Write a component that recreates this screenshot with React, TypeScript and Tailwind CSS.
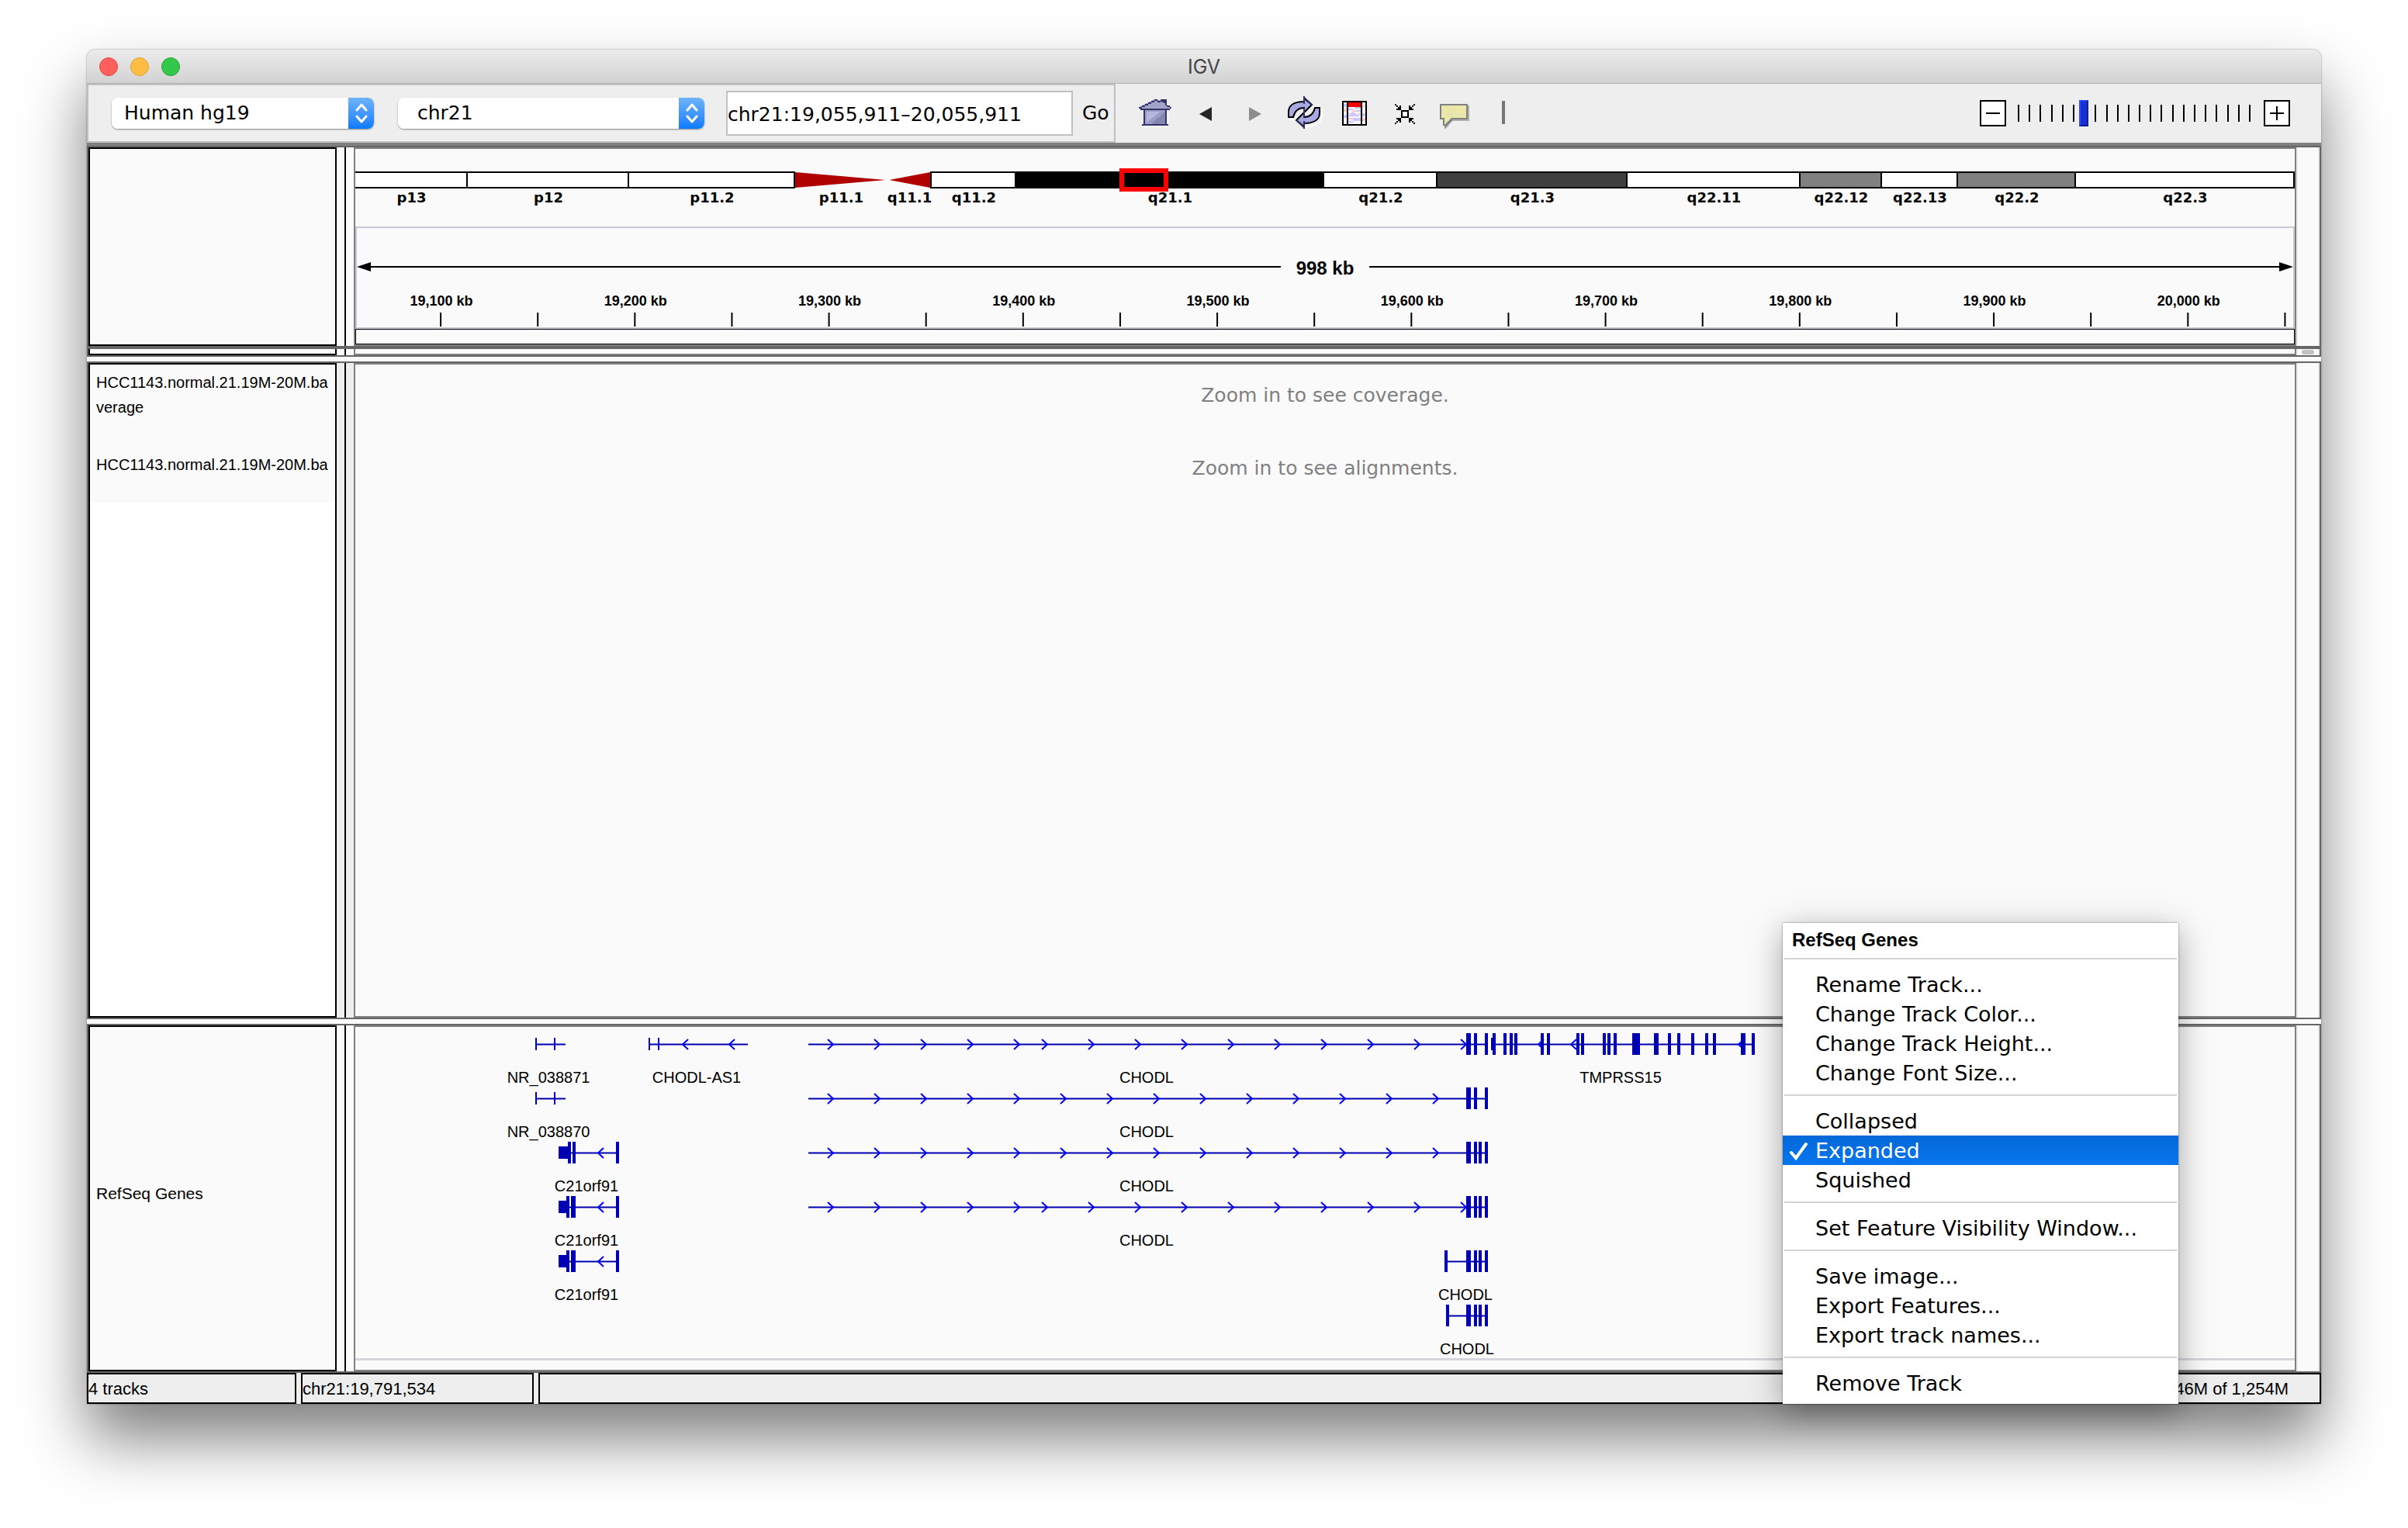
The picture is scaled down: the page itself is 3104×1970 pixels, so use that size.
import React from "react";

const UI_FONT = "font-['DejaVu_Sans',sans-serif]";
const ARIAL = "font-['Liberation_Sans',sans-serif]";

type BandKind = "white" | "black" | "dark" | "gray" | "cenLeft" | "cenRight";

const bands: { name: string; size: number; kind: BandKind }[] = [
  { name: "p13", size: 145, kind: "white" },
  { name: "p12", size: 208, kind: "white" },
  { name: "p11.2", size: 214, kind: "white" },
  { name: "p11.1", size: 119, kind: "cenLeft" },
  { name: "q11.1", size: 57, kind: "cenRight" },
  { name: "q11.2", size: 109, kind: "white" },
  { name: "q21.1", size: 397, kind: "black" },
  { name: "q21.2", size: 146, kind: "white" },
  { name: "q21.3", size: 245, kind: "dark" },
  { name: "q22.11", size: 223, kind: "white" },
  { name: "q22.12", size: 105, kind: "gray" },
  { name: "q22.13", size: 98, kind: "white" },
  { name: "q22.2", size: 152, kind: "gray" },
  { name: "q22.3", size: 282, kind: "white" },
];

const bandFill: Record<BandKind, string> = {
  white: "border-y-2 border-r-2 border-black bg-white",
  black: "bg-black",
  dark: "border-y-2 border-r-2 border-black bg-[#404040]",
  gray: "border-y-2 border-r-2 border-black bg-[#808080]",
  cenLeft: "",
  cenRight: "border-r-2 border-black",
};

const ticks = Array.from({ length: 20 }, (_, i) => ({
  at: 4.33 + i * 5.013,
  label:
    i % 2 === 0 ? (19100 + (i / 2) * 100).toLocaleString("en-US") + " kb" : "",
}));

type Transcript = {
  row: number;
  line: [number, number];
  thick: [number, number][];
  thin?: [number, number][];
  right?: number[];
  left?: number[];
  label: string;
  labelAt: number;
};

const range = (from: number, to: number, step: number) =>
  Array.from({ length: Math.floor((to - from) / step) + 1 }, (_, i) => from + i * step);

const chodlExons: [number, number][] = [[1432, 6], [1442, 4], [1448, 4], [1456, 4]];
const chodlShort: [number, number][] = [[1432, 6], [1442, 4], [1456, 4]];

const transcripts: Transcript[] = [
  { row: 0, line: [232, 271], thick: [], thin: [[232, 2], [256, 2]], label: "NR_038871", labelAt: 249 },
  { row: 1, line: [232, 271], thick: [], thin: [[232, 2], [256, 2]], label: "NR_038870", labelAt: 249 },
  { row: 0, line: [378, 506], thick: [], thin: [[378, 2], [390, 2]], left: [421, 481], label: "CHODL-AS1", labelAt: 440 },
  { row: 2, line: [262, 340], thick: [[274, 4], [280, 4], [336, 4]], thin: [[262, 13]], left: [312], label: "C21orf91", labelAt: 298 },
  { row: 3, line: [262, 340], thick: [[272, 4], [278, 6], [336, 4]], thin: [[262, 11]], left: [312], label: "C21orf91", labelAt: 298 },
  { row: 4, line: [262, 340], thick: [[272, 4], [278, 6], [336, 4]], thin: [[262, 11]], left: [312], label: "C21orf91", labelAt: 298 },
  { row: 0, line: [584, 1460], thick: chodlShort, right: [...range(616, 856, 60), ...range(892, 1432, 60)], label: "CHODL", labelAt: 1020 },
  { row: 1, line: [584, 1460], thick: chodlShort, right: range(616, 1396, 60), label: "CHODL", labelAt: 1020 },
  { row: 2, line: [584, 1460], thick: chodlExons, right: range(616, 1396, 60), label: "CHODL", labelAt: 1020 },
  { row: 3, line: [584, 1460], thick: chodlExons, right: [...range(616, 856, 60), ...range(892, 1432, 60)], label: "CHODL", labelAt: 1020 },
  { row: 4, line: [1404, 1460], thick: [[1404, 4], ...chodlExons], label: "CHODL", labelAt: 1431 },
  { row: 5, line: [1406, 1460], thick: [[1406, 4], ...chodlExons], label: "CHODL", labelAt: 1433 },
  {
    row: 0,
    line: [1464, 1804],
    thin: [[1464, 2]],
    thick: [
      [1466, 4], [1480, 4], [1488, 4], [1494, 4], [1528, 4], [1536, 4], [1574, 4], [1580, 4],
      [1608, 4], [1614, 4], [1622, 4], [1646, 10], [1674, 6], [1692, 4], [1704, 4], [1722, 4],
      [1740, 4], [1750, 4], [1786, 6], [1800, 4],
    ],
    left: [1524, 1566, 1782],
    label: "TMPRSS15",
    labelAt: 1631,
  },
];

function GeneTrack() {
  return (
    <svg viewBox="0 0 2500 442" preserveAspectRatio="xMinYMin meet" className="block w-full" aria-label="RefSeq Genes track">
      {transcripts.map((t, i) => {
        const top = t.row * 70;
        const mid = top + 22.5;
        return (
          <g key={i}>
            <line x1={t.line[0]} x2={t.line[1]} y1={mid} y2={mid} stroke="#0000b2" strokeWidth="2" />
            {(t.right ?? []).map((x) => (
              <path key={x} d={`M${x - 7} ${mid - 6.5}l7 6.5l-7 6.5`} fill="none" stroke="#0000ff" strokeWidth="2" />
            ))}
            {(t.left ?? []).map((x) => (
              <path key={x} d={`M${x + 8} ${mid - 6.5}l-7 6.5l7 6.5`} fill="none" stroke="#0000ff" strokeWidth="2" />
            ))}
            {t.thick.map(([x, w]) => (
              <rect key={x} x={x} y={top + 8} width={w} height="28" fill="#0000b2" />
            ))}
            {(t.thin ?? []).map(([x, w]) => (
              <rect key={x} x={x} y={top + 14} width={w} height="16" fill="#0000b2" />
            ))}
            <text x={t.labelAt} y={top + 72} textAnchor="middle" fontSize="20" fill="#000">
              {t.label}
            </text>
          </g>
        );
      })}
      <rect x="0" y="427" width="2500" height="3" fill="#d6d6de" />
    </svg>
  );
}

function Ideogram() {
  return (
    <div className="relative flex h-[100px] pt-[29px]">
      {bands.map((b) => (
        <div key={b.name} className="min-w-0 basis-0" style={{ flexGrow: b.size }}>
          <div className={"h-[22px] " + bandFill[b.kind]}>
            {b.kind === "cenLeft" && (
              <svg viewBox="0 0 100 22" preserveAspectRatio="none" className="block h-full w-full">
                <polygon points="0,1 98,11 0,21" fill="#b00000" />
              </svg>
            )}
            {b.kind === "cenRight" && (
              <svg viewBox="0 0 100 22" preserveAspectRatio="none" className="block h-full w-full">
                <polygon points="100,1 4,11 100,21" fill="#b00000" />
              </svg>
            )}
          </div>
          <div className={"flex justify-center whitespace-nowrap text-[18px] leading-6 font-bold " + UI_FONT}>
            {b.name}
          </div>
        </div>
      ))}
      <div className="absolute top-[25px] left-[39.4%] h-[30px] w-[2.5%] border-6 border-[#ff0000]" />
    </div>
  );
}

function Ruler() {
  return (
    <div className="flex h-[132px] flex-col border-2 border-[#c8c8d4]">
      <div className="mt-[32px] flex h-[36px] items-center">
        <svg viewBox="0 0 18 12" className="h-3 w-[18px]">
          <polygon points="0,6 18,0 18,12" />
        </svg>
        <div className="h-[2px] flex-1 bg-black" />
        <div className="px-5 pt-[3px] text-[24px] leading-[33px] font-bold">998 kb</div>
        <div className="h-[2px] flex-1 bg-black" />
        <svg viewBox="0 0 18 12" className="h-3 w-[18px]">
          <polygon points="18,6 0,0 0,12" />
        </svg>
      </div>
      <svg className="block w-full flex-1" aria-label="Genomic ruler">
        {ticks.map((t) => (
          <g key={t.at}>
            <line x1={t.at + "%"} x2={t.at + "%"} y1="41" y2="59" stroke="#000" strokeWidth="2" />
            {t.label && (
              <text x={t.at + "%"} y="32" dx="1" textAnchor="middle" fontSize="18" fontWeight="700">
                {t.label}
              </text>
            )}
          </g>
        ))}
      </svg>
    </div>
  );
}

function Pane({
  className,
  gutter,
  box = "border-2",
  scroll,
  names,
  children,
}: {
  className: string;
  gutter: string;
  box?: string;
  scroll?: React.ReactNode;
  names?: React.ReactNode;
  children?: React.ReactNode;
}) {
  return (
    <section className={"flex border-2 border-[#666666] bg-[#fafafa] " + className}>
      <div className={"flex w-80 shrink-0 flex-col overflow-hidden border-black " + box}>{names}</div>
      <div className={"flex w-[22px] shrink-0 pl-[10px] " + gutter}>
        <div className="w-[2px] bg-black" />
      </div>
      <div className={"min-w-0 flex-1 border-[#808080] " + box}>{children}</div>
      <div className="flex w-[30px] shrink-0 items-center justify-center border-x-2 border-r-[#e8e8e8] border-l-[#ececec]">
        {scroll}
      </div>
    </section>
  );
}

function Dropdown({ label, value, className, pad }: { label: string; value: string; className: string; pad: string }) {
  return (
    <div className={"relative h-10 overflow-hidden rounded-lg bg-white shadow-[0_1px_2px_rgba(0,0,0,0.45)] " + className}>
      <select aria-label={label} defaultValue={value} className={"block h-10 w-full appearance-none bg-white pr-10 text-[25px] outline-none " + pad}>
        <option>{value}</option>
      </select>
      <span className="pointer-events-none absolute inset-y-0 right-0 flex w-[33px] items-center justify-center bg-linear-to-b from-[#6cb3fa] to-[#067aff]">
        <svg viewBox="0 0 16 26" className="h-[26px] w-4" fill="none" stroke="#fff" strokeWidth="3" strokeLinecap="round" strokeLinejoin="round">
          <path d="M2 9l6-7l6 7M2 17l6 7l6-7" />
        </svg>
      </span>
    </div>
  );
}

function Tool({ label, children }: { label: string; children: React.ReactNode }) {
  return (
    <button type="button" aria-label={label} className="flex w-16 items-center justify-center">
      <svg viewBox="0 0 22 22" className="h-11 w-11" overflow="visible">
        {children}
      </svg>
    </button>
  );
}

function ToolIcons() {
  return (
    <div className="ml-5 flex h-full items-stretch">
      <Tool label="Home">
        <g shapeRendering="crispEdges">
          <path d="M20 7h2v2h-3v11H3v-1h15V9h2z" fill="#fff" />
          <path d="M14 2h4v5h-4z" fill="#333366" />
          <path d="M3 9h15v10H3z" fill="#9a9cc6" />
          <path d="M5 10h9L5 17z" fill="#b4b6dc" />
          <path d="M17 10v8H8z" fill="#8486b2" />
          <path d="M0 7L10 2h2L21 7v1H0z" fill="#a2a4cc" />
          <path d="M10 2h2v1h-2zM8 3h2v1H8zM12 3h2v1h-2zM6 4h2v1H6zM4 5h2v1H4zM2 6h2v1H2zM17 5h1v1h-1zM18 6h2v1h-2zM0 7h2v1H0zM20 7h1v1h-1zM1 8h19v1H1zM3 9h1v9H3zM17 9h1v9h-1zM2 18h17v1H2z" fill="#333366" />
        </g>
      </Tool>
      <Tool label="Back">
        <polygon points="15,7 15,16 7,11.5" fill="#262626" />
      </Tool>
      <Tool label="Forward">
        <polygon points="7,7 15,11.5 7,16" fill="#8c8c8c" />
      </Tool>
      <Tool label="Refresh">
        <g strokeWidth="1">
          <path d="M5.5 15h-4M11.5 21l1-1.5C17 19.500 22 17 22 12.500V8" stroke="#fff" fill="none" />
          <path d="M.5 13.500V10C.5 6 4 3.500 10.500 3.500V1L15.500 5.500L10.500 10.500V7.500C7 7.500 4.500 9.500 3.500 13.500Z" fill="#a6a9e2" stroke="#000" />
          <path d="M20.500 7.500V11C20.500 15 17 17.500 10.500 17.500V20L5.500 15.500L10.500 10.500V13.500C14 13.500 16.500 11.500 17.500 7.500Z" fill="#a6a9e2" stroke="#000" />
          <path d="M10.500 0V5M10.500 7.500V13.500M10.500 16V21M11 2l4.500 3.500M10 19l-4.500-3.500" stroke="#333366" fill="none" />
        </g>
      </Tool>
      <Tool label="Define a region of interest">
        <g shapeRendering="crispEdges">
          <path d="M3 3h16v16H3z" fill="#000" />
          <path d="M4 4h2v14H4zM7 4h8v14H7zM16 4h2v14h-2z" fill="#f6f4ff" />
          <path d="M7 4h8v3H7z" fill="#ff0000" />
          <path d="M4 5h2v2H4zM7 8h3v1H7zM11 7h4v1h-4zM8 11h4v2H8zM12 9h3v1h-3zM10 14h5v2h-5zM7 16h3v1H7zM16 11h2v2h-2zM4 12h2v2H4zM12 12h2v1h-2z" fill="#c6c8ff" />
          <path d="M4 8h2v2H4zM7 12h1v1H7zM10 9h2v1h-2zM9 10h2v1H9zM7 14h3v1H7zM16 6h2v1h-2zM16 14h2v2h-2zM13 11h2v1h-2z" fill="#ffc9c9" />
        </g>
      </Tool>
      <Tool label="Resize tracks to fit in window">
        <g shapeRendering="crispEdges">
          <path d="M9 9h5v5H9z" fill="#000" />
          <path d="M10 10h3v3h-3z" fill="#fff" />
          <path d="M5 5h1v1H5zM6 6h1v1H6zM7 7h1v1H7zM6 8h3v1H6zM8 6h1v3H8zM7 7h2v2H7zM17 5h1v1h-1zM16 6h1v1h-1zM15 7h1v1h-1zM14 8h3v1h-3zM14 6h1v3h-1zM14 7h2v2h-2zM5 17h1v1H5zM6 16h1v1H6zM7 15h1v1H7zM6 14h3v1H6zM8 14h1v3H8zM7 14h2v2H7zM17 17h1v1h-1zM16 16h1v1h-1zM15 15h1v1h-1zM14 14h3v1h-3zM14 14h1v3h-1zM14 14h2v2h-2z" fill="#000" />
        </g>
      </Tool>
      <Tool label="Show details">
        <g shapeRendering="crispEdges">
          <path d="M20 6h1v10h-11l-4 5h-1v-1z" fill="#b0b0b0" />
          <path d="M2 5h18v10H10v1H9v1H8v1H7v1H6v1H5v-1H4v-4H2z" fill="#808080" />
          <path d="M3 6h16v8H9v1H8v1H7v1H6v1H5v-4H3z" fill="#ebe7a8" />
          <path d="M5 11h1v1H5zM7 11h1v1H7zM9 11h1v1H9zM12 11h1v1h-1zM14 11h1v1h-1z" fill="#dcdcc0" />
        </g>
      </Tool>
      <Tool label="Ruler">
        <rect x="10" y="3" width="2" height="15" fill="#777777" />
      </Tool>
    </div>
  );
}

function ZoomSlider() {
  return (
    <div className="mr-10 ml-auto flex items-center gap-[10px]">
      <button type="button" aria-label="Zoom out" className="h-[34px] w-[34px] border-2 border-black bg-white p-[6px]">
        <svg viewBox="0 0 18 18" className="block h-[18px] w-[18px]">
          <path d="M0 9h18" stroke="#000" strokeWidth="2" />
        </svg>
      </button>
      <div className="relative h-[34px] w-[312px]">
        <svg viewBox="0 0 312 34" className="block h-full w-full">
          {range(0, 21, 1)
            .filter((i) => i !== 6)
            .map((i) => (
              <rect key={i} x={Math.round(5 + i * 14.19)} y="6" width="2" height="22" />
            ))}
        </svg>
        <input
          type="range"
          aria-label="Zoom"
          min={0}
          max={21}
          step="any"
          defaultValue={5.86}
          className="absolute inset-0 h-full w-full appearance-none bg-transparent [&::-webkit-slider-thumb]:h-[34px] [&::-webkit-slider-thumb]:w-[12px] [&::-webkit-slider-thumb]:appearance-none [&::-webkit-slider-thumb]:border-2 [&::-webkit-slider-thumb]:border-t-[#2244ee] [&::-webkit-slider-thumb]:border-r-[#1020a0] [&::-webkit-slider-thumb]:border-b-[#0c1c90] [&::-webkit-slider-thumb]:border-l-[#2a50ff] [&::-webkit-slider-thumb]:bg-[#1a2fd0]"
        />
      </div>
      <button type="button" aria-label="Zoom in" className="h-[34px] w-[34px] border-2 border-black bg-white p-[6px]">
        <svg viewBox="0 0 18 18" className="block h-[18px] w-[18px]">
          <path d="M0 9h18M9 0v18" stroke="#000" strokeWidth="2" />
        </svg>
      </button>
    </div>
  );
}

const menuGroups: string[][] = [
  ["Rename Track...", "Change Track Color...", "Change Track Height...", "Change Font Size..."],
  ["Collapsed", "Expanded", "Squished"],
  ["Set Feature Visibility Window..."],
  ["Save image...", "Export Features...", "Export track names..."],
  ["Remove Track"],
];

function ContextMenu() {
  return (
    <div
      role="menu"
      aria-label="RefSeq Genes"
      className={"absolute right-[184px] bottom-0 w-[510px] bg-white pb-2 shadow-[0_0_2px_rgba(0,0,0,0.5),0_10px_40px_rgba(0,0,0,0.35)] " + UI_FONT}
    >
      <div className={"h-9 px-3 pt-1 text-[24px] leading-[36px] font-bold " + ARIAL}>RefSeq Genes</div>
      {menuGroups.map((group) => (
        <div key={group[0]}>
          <div className="mx-[2px] h-6 pt-[9px]">
            <div className="h-[2px] bg-[#d4d4d4]" />
          </div>
          {group.map((item) => {
            const on = item === "Expanded";
            return (
              <button
                key={item}
                type="button"
                role="menuitem"
                className={
                  "flex h-[38px] w-full items-center pt-[2px] text-left text-[27px] leading-9 " +
                  (on ? "bg-linear-to-b from-[#0568d8] to-[#0676ee] text-white" : "text-black")
                }
              >
                <span className="flex w-[42px] shrink-0 pl-[9px]">
                  {on && (
                    <svg viewBox="0 0 24 24" className="h-6 w-6" fill="none" stroke="#fff" strokeWidth="4" strokeLinecap="round">
                      <path d="M2 14l6 7L21 3" />
                    </svg>
                  )}
                </span>
                <span>{item}</span>
              </button>
            );
          })}
        </div>
      ))}
    </div>
  );
}

export default function App() {
  return (
    <div className={"flex min-h-screen flex-col bg-white px-28 pt-16 pb-40 text-black " + ARIAL}>
      <main className="relative flex flex-1 flex-col rounded-t-[10px] bg-[#eeeeee] shadow-[0_0_2px_rgba(0,0,0,0.5),0_45px_80px_rgba(0,0,0,0.5)]">
        <header className="relative flex h-11 items-center rounded-t-[10px] border-b border-[#b0b0b0] bg-linear-to-b from-[#ececec] to-[#d2d2d2] px-4">
          <div className="flex gap-4">
            <button type="button" aria-label="Close" className="h-6 w-6 rounded-full border border-[#e2463f] bg-[#ff605c]" />
            <button type="button" aria-label="Minimize" className="h-6 w-6 rounded-full border border-[#e0a032] bg-[#ffbd44]" />
            <button type="button" aria-label="Full screen" className="h-6 w-6 rounded-full border border-[#1fa536] bg-[#34c84a]" />
          </div>
          <h1 className="pointer-events-none absolute inset-x-0 pt-[2px] text-center font-['Inter',sans-serif] text-[25px] text-[#454545]">IGV</h1>
        </header>

        <div className={"flex h-[76px] items-center " + UI_FONT}>
          <form className="flex h-full w-[1326px] items-center border-2 border-[#c0c0c0] pl-[30px]" onSubmit={(e) => e.preventDefault()}>
            <Dropdown label="Genome" value="Human hg19" className="w-[338px]" pad="pl-4" />
            <Dropdown label="Chromosome" value="chr21" className="ml-[31px] w-[395px]" pad="pl-[25px]" />
            <input
              aria-label="Locus"
              defaultValue="chr21:19,055,911–20,055,911"
              className="ml-7 h-[58px] w-[447px] border-2 border-[#c0c0c0] bg-white pt-[2px] text-[25px] outline-none"
            />
            <button type="submit" className="ml-3 text-[25px]">Go</button>
          </form>
          <ToolIcons />
          <ZoomSlider />
        </div>
        <div className="h-1 bg-[#808080]" />

        <Pane className="h-[260px]" gutter="">
          <Ideogram />
          <Ruler />
          <div className="h-5 border border-black" />
        </Pane>
        <Pane
          className="h-3"
          gutter=""
          box="border-x-2 border-b-2"
          scroll={<div className="h-[6px] w-4 rounded-full bg-[#c1c1c1]" />}
        />
        <div className="h-[6px] bg-[#fafafa]" />
        <Pane
          className="min-h-[400px] flex-1"
          gutter="bg-[#eeeeee]"
          names={
            <>
              <div className="h-[108px] pt-[7px] pl-2 text-[20px] leading-8 whitespace-nowrap">
                <div>HCC1143.normal.21.19M-20M.ba</div>
                <div>verage</div>
              </div>
              <div className="h-[70px] pt-[5px] pl-2 text-[20px] leading-8 whitespace-nowrap">HCC1143.normal.21.19M-20M.ba</div>
              <div className="flex-1 bg-white" />
            </>
          }
        >
          <div className={"flex flex-col gap-[46px] pt-4 text-center text-[25px] leading-[48px] text-[#808080] " + UI_FONT}>
            <p>Zoom in to see coverage.</p>
            <p>Zoom in to see alignments.</p>
          </div>
        </Pane>
        <div className="h-[6px] bg-[#fafafa]" />
        <Pane
          className="h-[450px]"
          gutter=""
          names={<div className="flex flex-1 items-center pb-3 pl-2 text-[21px]">RefSeq Genes</div>}
        >
          <GeneTrack />
        </Pane>

        <footer className="flex h-10 gap-[6px] text-[22px] leading-[37px]">
          <div className="w-[270px] border-2 border-black">4 tracks</div>
          <div className="w-[300px] border-2 border-black">chr21:19,791,534</div>
          <div className="flex-1 border-2 border-black pr-10 text-right">846M of 1,254M</div>
        </footer>

        <ContextMenu />
      </main>
    </div>
  );
}
